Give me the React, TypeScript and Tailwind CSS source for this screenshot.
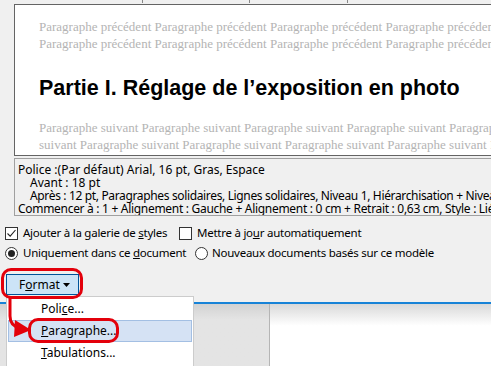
const ui = "font-['Noto_Sans',sans-serif] text-[12px] text-black";
const opt = "font-['Noto_Sans',sans-serif] text-[11.5px] tracking-[-0.25px] text-black";

function CheckBox({ checked }: { checked?: boolean }) {
  return (
    <span className="w-[13px] h-[13px] border border-[#333] bg-white flex items-center justify-center shrink-0">
      {checked && (
        <svg width="11" height="11" viewBox="0 0 11 11">
          <path d="M1.5 5.5 L4.2 8.2 L9.5 2" fill="none" stroke="#222" strokeWidth="1.1" />
        </svg>
      )}
    </span>
  );
}

function Radio({ checked }: { checked?: boolean }) {
  return (
    <span className="w-[13px] h-[13px] rounded-full border border-[#333] bg-white flex items-center justify-center shrink-0">
      {checked && <span className="w-[7px] h-[7px] rounded-full bg-[#222]" />}
    </span>
  );
}

export default function App() {
  const prev = "Paragraphe précédent Paragraphe précédent Paragraphe précédent Paragraphe précédent Paragraphe précédent";
  const next1 = "Paragraphe suivant Paragraphe suivant Paragraphe suivant Paragraphe suivant Paragraphe suivant";
  const next2 = "suivant Paragraphe suivant Paragraphe suivant Paragraphe suivant Paragraphe suivant Paragraphe";

  return (
    <div className="relative w-[491px] h-[366px] overflow-hidden bg-[#f0f0f0] flex flex-col">
      {/* repères de la règle */}
      <div className="h-[4px] flex shrink-0">
        <span className="ml-[142px] w-px h-[3px] bg-[#888]" />
        <span className="ml-[106px] w-px h-[3px] bg-[#888]" />
        <span className="ml-[97px] w-px h-[3px] bg-[#888]" />
      </div>

      {/* aperçu */}
      <div className="ml-[14px] w-[520px] h-[152px] shrink-0 border border-[#646464] bg-white pl-[24px] pt-[13px] overflow-hidden">
        <div className="font-['Liberation_Serif',serif] text-[13px] leading-[17px] text-[#b4b4b4] whitespace-nowrap">
          <div>{prev}</div>
          <div>{prev}</div>
        </div>
        <div className="mt-[23px] font-['Liberation_Sans',sans-serif] font-bold text-[21.5px] leading-[26px] text-black whitespace-nowrap">
          Partie I. Réglage de l’exposition en photo
        </div>
        <div className="mt-[18px] font-['Liberation_Serif',serif] text-[13px] leading-[17px] text-[#b4b4b4] whitespace-nowrap">
          <div>{next1}</div>
          <div>{next2}</div>
        </div>
      </div>

      {/* description */}
      <div className={`mt-[2px] ml-[14px] w-[520px] h-[58px] shrink-0 overflow-hidden border border-[#a0a0a0] pl-[3px] pt-[4px] leading-[13px] whitespace-nowrap ${ui}`}>
        <div>Police :(Par défaut) Arial, 16 pt, Gras, Espace</div>
        <div className="pl-[12px]">Avant : 18 pt</div>
        <div className="pl-[12px] tracking-[-0.35px]">Après : 12 pt, Paragraphes solidaires, Lignes solidaires, Niveau 1, Hiérarchisation + Niveau : 1 + Style de numérotation</div>
        <div className="tracking-[-0.3px]">Commencer à : 1 + Alignement : Gauche + Alignement : 0 cm + Retrait : 0,63 cm, Style : Lié, Afficher dans la galerie</div>
      </div>

      {/* options */}
      <div className={`mt-[9px] h-[16px] shrink-0 flex items-center whitespace-nowrap ${opt}`}>
        <div className="ml-[5px] w-[174px] shrink-0 flex items-center gap-[5px]">
          <CheckBox checked />
          <span>Ajouter à la galerie de <span className="underline">s</span>tyles</span>
        </div>
        <div className="flex items-center gap-[5px]">
          <CheckBox />
          <span>Mettre à jo<span className="underline">u</span>r automatiquement</span>
        </div>
      </div>
      <div className={`mt-[4px] h-[16px] shrink-0 flex items-center whitespace-nowrap ${opt}`}>
        <div className="ml-[5px] w-[190px] shrink-0 flex items-center gap-[5px]">
          <Radio checked />
          <span>Uniquement dans ce <span className="underline">d</span>ocument</span>
        </div>
        <div className="flex items-center gap-[4px]">
          <Radio />
          <span>Nouveaux documents basés sur ce modèle</span>
        </div>
      </div>

      {/* bouton Format */}
      <div className="mt-[13px] ml-[6px] shrink-0">
        <button className={`w-[73px] h-[21px] bg-[#cce4f7] border border-[#005499] flex items-center pl-[12px] gap-[3px] ${ui}`}>
          <span>F<span className="underline">o</span>rmat</span>
          <svg width="7" height="4" viewBox="0 0 7 4"><path d="M0 0 H7 L3.5 4 Z" fill="#000" /></svg>
        </button>
      </div>

      {/* zone de document derrière */}
      <div className="mt-[7px] h-[2px] bg-[#1883d7] shrink-0" />
      <div className="flex-1 flex">
        <div className="w-[270px] bg-gradient-to-b from-[#d2d2d2] to-[#e4e4e4] to-[25%] border-r border-[#b5b5b5]" />
        <div className="flex-1 bg-gradient-to-b from-[#d9d9d9] to-white to-[35%]" />
      </div>

      {/* menu déroulant */}
      <div className={`absolute left-[6px] top-[296px] w-[188px] h-[80px] bg-white border border-[#cccccc] p-px ${ui}`}>
        <div className="h-[22px] flex items-center pl-[33px]">
          <span>Poli<span className="underline">c</span>e...</span>
        </div>
        <div className="h-[22px] flex items-center pl-[32px] bg-[#d5e2f4] border border-[#a3bfe3]">
          <span><span className="underline">P</span>aragraphe...</span>
        </div>
        <div className="h-[22px] flex items-center pl-[33px]">
          <span><span className="underline">T</span>abulations...</span>
        </div>
      </div>

      {/* annotations rouges */}
      <div className="absolute left-[1px] top-[268px] w-[82px] h-[31px] rounded-[10px] border-[3px] border-[#e3000b]" />
      <div className="absolute left-[28px] top-[318px] w-[91px] h-[25px] rounded-[10px] border-[3px] border-[#e3000b]" />
      <svg className="absolute left-0 top-[296px]" width="40" height="45" viewBox="0 0 40 45">
        <path d="M10 0 V20 Q10 30 20 32" fill="none" stroke="#e3000b" strokeWidth="3" />
        <path d="M31 34 L15 24 L14 41 Z" fill="#e3000b" />
      </svg>
    </div>
  );
}
